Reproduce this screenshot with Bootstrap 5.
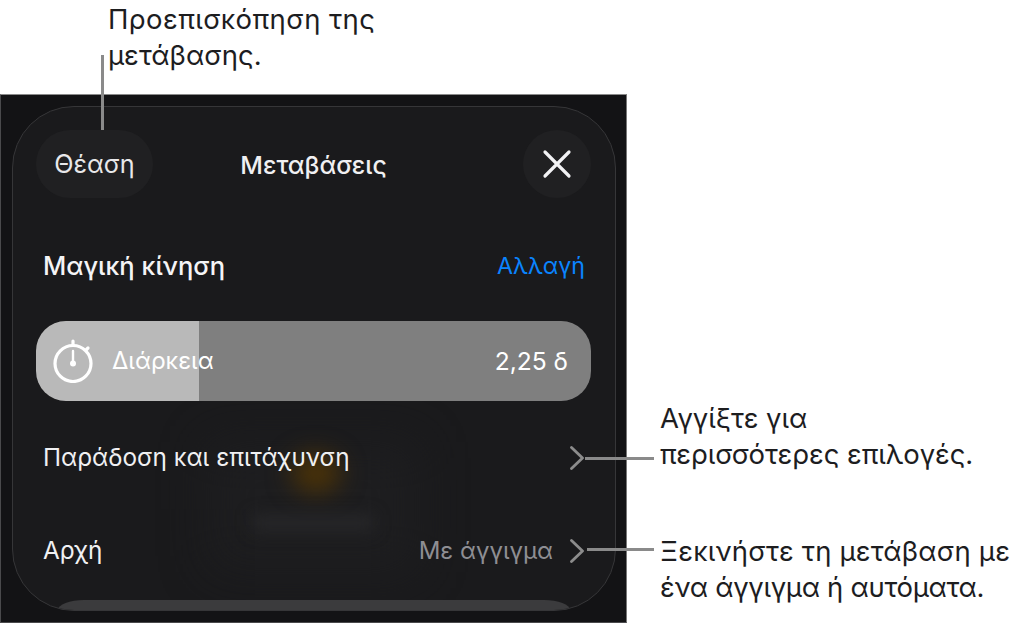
<!DOCTYPE html>
<html lang="el">
<head>
<meta charset="utf-8">
<title>Μεταβάσεις</title>
<link href="https://cdn.jsdelivr.net/npm/bootstrap@5.3.0/dist/css/bootstrap.min.css" rel="stylesheet">
<style>
html,body{margin:0;background:#fff;overflow:hidden}
body{font-family:"Inter","Noto Sans",sans-serif}
.stage{position:relative;width:1021px;height:625px;padding-top:94px}
.shell{width:627px;height:529px;background:#131315;border:1px solid #4a4a4c;border-top-color:#8a8a8a;border-right-color:#777;padding:11px 10px 10px 11px}
.sheet{position:relative;height:505px;background:#1a1a1c;border:1px solid #363638;border-radius:62px;overflow:hidden;padding:23px 24px 0 23px}
.sheet>*{position:relative}
.glowbox{position:absolute!important;left:195px;top:335px;width:210px;height:130px;background:#1f1f21;filter:blur(24px);opacity:.75}
.glowamber{position:absolute!important;left:278px;top:346px;width:50px;height:40px;border-radius:50%;background:#4a3208;filter:blur(12px)}
.glowtext{position:absolute!important;left:240px;top:408px;width:120px;height:16px;background:#272729;filter:blur(8px)}
.strip{position:absolute!important;left:45px;right:45px;bottom:0;height:10px;background:#3b3b3d;border-radius:26px 26px 0 0/10px 10px 0 0}
.roundbtn{height:68px;background:#202022;color:#e8e8ea;border:0;border-radius:34px;font-size:25.2px;padding:2px 0 0}
.viewbtn{width:117px}
.closebtn{width:68px;padding:0}
.title{color:#f0f0f2;font-size:24.8px;font-weight:500;margin:3px 49px 0 0;line-height:1.2}
.magic{height:48px;margin-top:44px;padding:0 6px 0 7px}
.magic-name{color:#f4f4f6;font-size:25.5px;font-weight:500}
.magic-link{color:#0a84ff;font-size:23.2px;font-weight:400}
.slider{height:80px;margin-top:31px;border-radius:30px;background:linear-gradient(90deg,#b9b9b9 163px,#7f7f7f 163px);color:#fff;font-size:24px;padding:0 23px 0 17px;gap:19px}
.value{font-size:24.6px}
.optrow{height:93px;padding:0 7px;font-size:24.3px;color:#f0f0f2}
.first{margin-top:10px}
.muted{color:#8e8e93;font-size:24px;margin-right:17px}
.note{position:absolute;color:#1d1d1f;font-size:27.5px;line-height:35.5px;white-space:nowrap;margin:0}
.leader{position:absolute;background:#8a8a8a}
.n1{left:108px;top:2px}
.n2{left:660px;top:401px;letter-spacing:-.08px}
.n3{left:660px;top:534px}
.wide1{letter-spacing:.4px}
.wide{letter-spacing:.17px}
.tight{letter-spacing:-.3px}
.l1{left:100.5px;top:55px;width:3px;height:75px}
.l2{left:585px;top:456.5px;width:69px;height:3px}
.l3{left:587px;top:547.5px;width:67px;height:3px}
</style>
</head>
<body>
<div class="stage">
  <div class="shell">
    <div class="sheet">
      <div class="glowbox"></div>
      <div class="glowamber"></div>
      <div class="glowtext"></div>
      <div class="strip"></div>
      <div class="d-flex justify-content-between align-items-center">
        <button class="roundbtn viewbtn" type="button">Θέαση</button>
        <h1 class="title">Μεταβάσεις</h1>
        <button class="roundbtn closebtn d-flex align-items-center justify-content-center" type="button" aria-label="Κλείσιμο">
          <svg width="30" height="30" viewBox="0 0 30 30"><path d="M3 3 27 27M27 3 3 27" stroke="#f2f2f4" stroke-width="3.2" stroke-linecap="round"/></svg>
        </button>
      </div>
      <div class="magic d-flex justify-content-between align-items-center">
        <span class="magic-name">Μαγική κίνηση</span>
        <span class="magic-link">Αλλαγή</span>
      </div>
      <div class="slider d-flex align-items-center">
        <svg width="40" height="44" viewBox="0 0 40 44" class="flex-shrink-0">
          <g fill="none" stroke="#fff" stroke-width="3.2" stroke-linecap="round">
            <circle cx="20" cy="24.5" r="18"/>
            <path d="M20 2V6M35 9 33 11"/>
            <path d="M20 12V24" stroke-width="2.4"/>
          </g>
          <circle cx="20" cy="24.5" r="3" fill="#fff"/>
        </svg>
        <span>Διάρκεια</span>
        <span class="value ms-auto">2,25 δ</span>
      </div>
      <div class="optrow first d-flex align-items-center">
        <span>Παράδοση και επιτάχυνση</span>
        <svg class="ms-auto" width="14" height="24" viewBox="0 0 14 24"><path d="M1.5 1.5 12.5 12 1.5 22.5" fill="none" stroke="#8c8c8c" stroke-width="2.8" stroke-linecap="round" stroke-linejoin="round"/></svg>
      </div>
      <div class="optrow d-flex align-items-center">
        <span>Αρχή</span>
        <span class="muted ms-auto">Με άγγιγμα</span>
        <svg width="14" height="24" viewBox="0 0 14 24"><path d="M1.5 1.5 12.5 12 1.5 22.5" fill="none" stroke="#8c8c8c" stroke-width="2.8" stroke-linecap="round" stroke-linejoin="round"/></svg>
      </div>
    </div>
  </div>

  <p class="note n1"><span class="wide1">Προεπισκόπηση της</span><br>μετάβασης.</p>
  <p class="note n2">Αγγίξτε για<br>περισσότερες επιλογές.</p>
  <p class="note n3"><span class="wide">Ξεκινήστε τη μετάβαση με</span><br><span class="tight">ένα άγγιγμα ή αυτόματα.</span></p>
  <div class="leader l1"></div>
  <div class="leader l2"></div>
  <div class="leader l3"></div>
</div>
<script src="https://cdn.jsdelivr.net/npm/bootstrap@5.3.0/dist/js/bootstrap.bundle.min.js"></script>
</body>
</html>
